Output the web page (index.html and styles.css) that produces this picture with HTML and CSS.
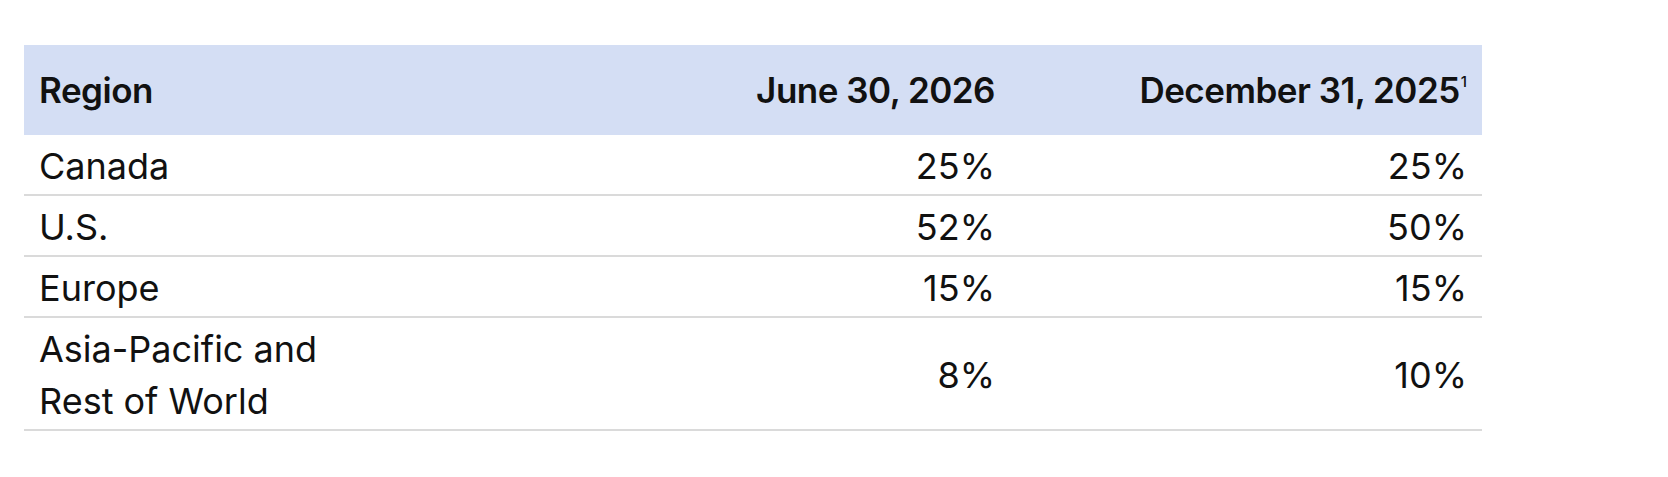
FILE: index.html
```html
<!DOCTYPE html>
<html lang="en">
<head>
<meta charset="utf-8">
<title>Region allocation</title>
<link rel="stylesheet" href="styles.css">
</head>
<body>
<table class="region-table">
  <colgroup>
    <col class="col-region">
    <col class="col-june">
    <col class="col-dec">
  </colgroup>
  <thead>
    <tr>
      <th class="cell-left">Region</th>
      <th class="cell-right">June 30, 2026</th>
      <th class="cell-right">December 31, 2025<sup class="note">1</sup></th>
    </tr>
  </thead>
  <tbody>
    <tr>
      <td class="cell-left">Canada</td>
      <td class="cell-right num">25%</td>
      <td class="cell-right num">25%</td>
    </tr>
    <tr>
      <td class="cell-left">U.S.</td>
      <td class="cell-right num">52%</td>
      <td class="cell-right num">50%</td>
    </tr>
    <tr>
      <td class="cell-left">Europe</td>
      <td class="cell-right num">15%</td>
      <td class="cell-right num">15%</td>
    </tr>
    <tr>
      <td class="cell-left">Asia-Pacific and<br>Rest of World</td>
      <td class="cell-right num">8%</td>
      <td class="cell-right num">10%</td>
    </tr>
  </tbody>
</table>
</body>
</html>
```

FILE: styles.css
```css
html, body {
  background: #ffffff;
}

body {
  margin: 0;
  padding: 45px 0 0 24px;
  font-family: Inter, "Liberation Sans", Arial, sans-serif;
  color: #111111;
}

.region-table {
  width: 1458px;
  border-collapse: collapse;
  table-layout: fixed;
}

.col-region { width: 500px; }
.col-june { width: 486px; }
.col-dec { width: 472px; }

.region-table th {
  background: #d4def4;
  height: 90px;
  padding: 0 15px;
  font-size: 35px;
  line-height: 42px;
  font-weight: 600;
  letter-spacing: -0.5px;
  vertical-align: middle;
}

.region-table td {
  padding: 5px 15px 2px;
  font-size: 36px;
  line-height: 52px;
  letter-spacing: 0;
  border-bottom: 2px solid #dadada;
  vertical-align: middle;
}

.cell-left { text-align: left; }
.cell-right { text-align: right; }

.num {
  letter-spacing: -1.6px;
  padding-right: 14px;
}

.note {
  font-size: 15px;
  font-weight: 500;
  line-height: 1;
  vertical-align: top;
  position: relative;
  top: 5px;
  margin-left: 1px;
  letter-spacing: 0;
}
```
